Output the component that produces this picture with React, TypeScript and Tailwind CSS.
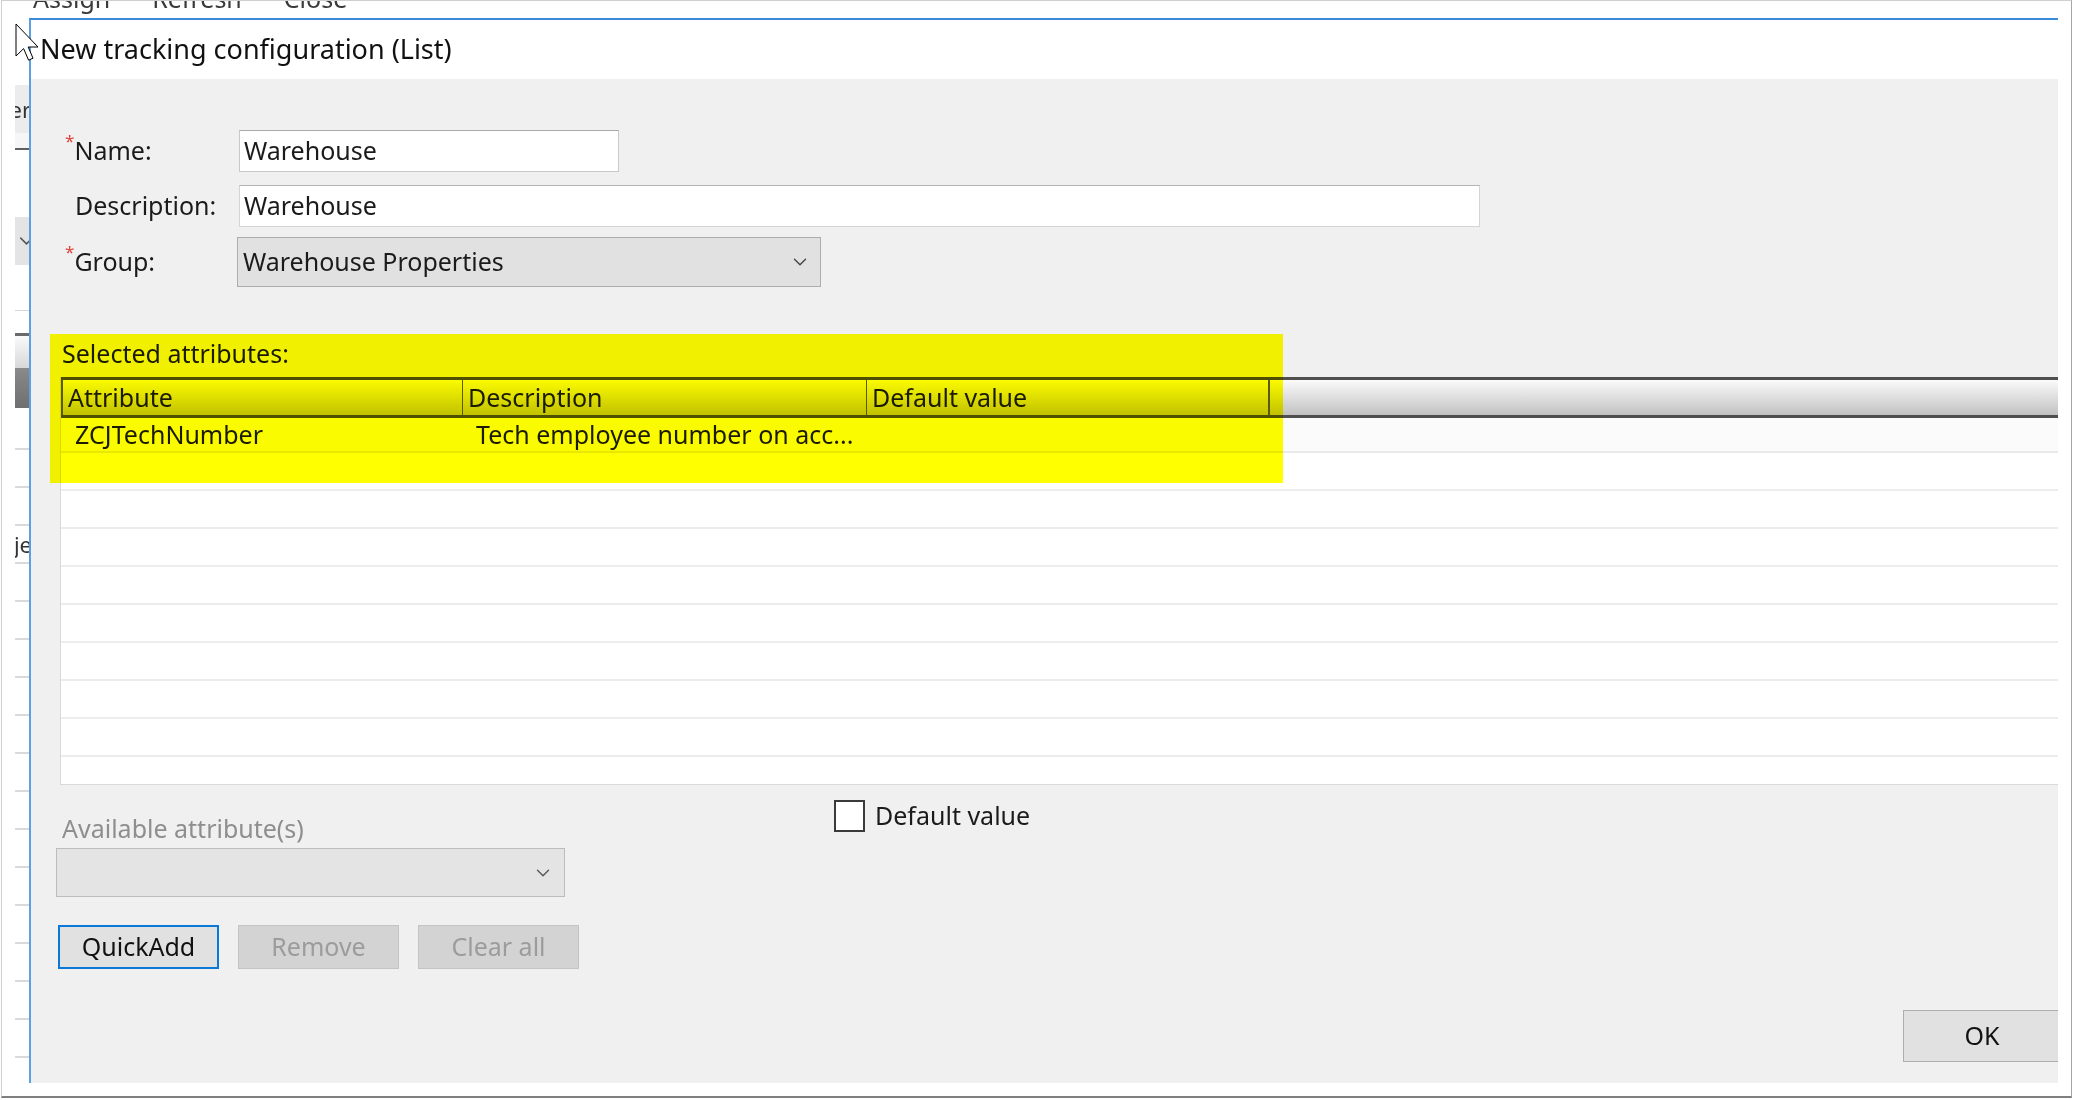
import React from "react";
import { ChevronDown } from "lucide-react";

// one row of the attribute grid
type Row = { attribute: string; description: string; value: string };

const rows: Row[] = [
  { attribute: "ZCJTechNumber", description: "Tech employee number on acc...", value: "" },
  ...Array.from({ length: 9 }, () => ({ attribute: "", description: "", value: "" })),
];

function Cursor() {
  return (
    <svg className="absolute left-[15px] top-[23px]" width="24" height="39" viewBox="0 0 12 19.5">
      <path
        d="M0.5 0.5 V16.5 L4.3 12.8 L6.8 18.6 L9 17.6 L6.6 12 H11.5 Z"
        fill="#fff"
        stroke="#000"
        strokeWidth="0.5"
        strokeLinejoin="miter"
      />
    </svg>
  );
}

// slice of the window that sits behind the dialog
function BackgroundStrip() {
  return (
    <div className="flex w-[27px] shrink-0 flex-col pl-[13px]">
      <div className="h-[67px]" />
      <div className="flex h-[48px] items-center justify-end overflow-hidden bg-[#ececec] text-[22px] text-[#333]">
        <span className="-mr-[2px]">er</span>
      </div>
      <div className="h-[15px] bg-[#f6f6f6]" />
      <div className="h-[2px] bg-[#606060]" />
      <div className="h-[67px]" />
      <div className="flex h-[48px] items-center justify-end overflow-hidden bg-[#e4e4e4]">
        <ChevronDown size={24} strokeWidth={1.5} className="-mr-[9px] text-[#555]" />
      </div>
      <div className="h-[45px]" />
      <div className="h-px bg-[#d6d6d6]" />
      <div className="h-[22px]" />
      <div className="h-[3px] bg-[#6a6a6a]" />
      <div className="h-[32px] bg-gradient-to-b from-[#fafafa] to-[#d8d8d8]" />
      <div className="h-[40px] bg-gradient-to-b from-[#8a8a8a] to-[#6f6f6f]" />
      <div className="h-[40px]" />
      {Array.from({ length: 17 }).map((_, i) => (
        <div key={i} className="flex h-[38px] items-center justify-end overflow-hidden border-t-2 border-[#dadada] text-[22px] text-[#333]">
          {i === 2 ? <span className="-mr-[3px]">je</span> : null}
        </div>
      ))}
    </div>
  );
}

function Dialog() {
  return (
    <div className="flex h-[1065px] w-[2029px] shrink-0 flex-col border-l-2 border-t-2 border-[#3b8ad9] border-l-[#5ba0e3]">
      <div className="flex h-[59px] shrink-0 items-center bg-white pl-[9px] text-[27px] text-[#111]">
        New tracking configuration (List)
      </div>

      <div className="relative flex flex-1 flex-col overflow-hidden bg-[#f0f0f0]">
        {/* header fields */}
        <div className="flex flex-col pl-[44px] pt-[51px]">
          <div className="flex h-[42px] items-center">
            <div className="w-[164px]">
              <span className="-ml-[10px] align-top text-[17px] leading-none text-[#e0403a]">*</span>
              Name:
            </div>
            <div className="flex h-[42px] w-[380px] items-center border border-[#c9c9c9] border-t-[#a9a9a9] bg-white px-[4px]">Warehouse</div>
          </div>
          <div className="mt-[13px] flex h-[42px] items-center">
            <div className="w-[164px]">Description:</div>
            <div className="flex h-[42px] w-[1241px] items-center border border-[#d4d4d4] border-t-[#b4b4b4] bg-white px-[4px]">Warehouse</div>
          </div>
          <div className="mt-[10px] flex h-[50px] items-center">
            <div className="w-[164px]">
              <span className="-ml-[10px] align-top text-[17px] leading-none text-[#e0403a]">*</span>
              Group:
            </div>
            <div className="-ml-[2px] flex h-[50px] w-[584px] items-center justify-between border border-[#adadad] bg-[#e1e1e1] pl-[5px] pr-[9px]">
              <span>Warehouse Properties</span>
              <ChevronDown size={22} strokeWidth={1.5} className="text-[#444]" />
            </div>
          </div>
        </div>

        <div className="mt-[49px] pl-[31px] leading-[34px]">Selected attributes:</div>

        {/* attribute grid */}
        <div className="ml-[29px] mt-[7px] flex h-[408px] flex-col overflow-hidden border-b border-l border-[#d9d9d9] bg-white">
          <div className="flex h-[41px] shrink-0 border-b-[3px] border-t-[3px] border-[#4f4f4f] bg-gradient-to-b from-[#fbfbfb] to-[#c2c2c2]">
            <div className="flex w-[402px] items-center border-l-2 border-r border-[#5a5a5a] pl-[5px]">Attribute</div>
            <div className="flex w-[404px] items-center border-r border-[#5a5a5a] pl-[5px]">Description</div>
            <div className="flex w-[403px] items-center border-r-2 border-[#5a5a5a] pl-[5px]">Default value</div>
            <div className="flex-1" />
          </div>
          {rows.map((r, i) => (
            <div
              key={i}
              className={
                i === 0
                  ? "flex h-[35px] shrink-0 items-center border-b-2 border-[#e9e9e9] bg-[#fbfbfb]"
                  : "flex h-[38px] shrink-0 items-center border-b-2 border-[#ececec]"
              }
            >
              <div className="w-[402px] pl-[14px]">{r.attribute}</div>
              <div className="w-[404px] pl-[13px]">{r.description}</div>
              <div className="w-[403px] pl-[8px]">{r.value}</div>
            </div>
          ))}
        </div>

        {/* lower controls */}
        <div className="flex">
          <div className="flex w-[803px] flex-col pl-[25px]">
            <div className="ml-[6px] mt-[26px] leading-[34px] text-[#8e8e8e]">Available attribute(s)</div>
            <div className="mt-[3px] flex h-[49px] w-[509px] items-center justify-end border border-[#bcbcbc] bg-[#e4e4e4] pr-[10px]">
              <ChevronDown size={22} strokeWidth={1.5} className="text-[#555]" />
            </div>
            <div className="ml-[2px] mt-[28px] flex gap-[19px]">
              <button className="h-[44px] w-[161px] border-2 border-[#0a78d6] bg-[#e1e1e1] text-[#111]">QuickAdd</button>
              <button className="h-[44px] w-[161px] border border-[#c4c4c4] bg-[#d3d3d3] text-[#9c9c9c]">Remove</button>
              <button className="h-[44px] w-[161px] border border-[#c4c4c4] bg-[#d3d3d3] text-[#9c9c9c]">Clear all</button>
            </div>
          </div>
          <div className="mt-[15px] flex h-[32px] items-center gap-[10px]">
            <div className="h-[32px] w-[31px] border-2 border-[#3a3a3a] bg-white" />
            <span>Default value</span>
          </div>
        </div>

        <div className="flex-1" />
        <div className="mb-[21px] flex justify-end">
          <button className="-mr-[3px] h-[52px] w-[158px] border border-[#adadad] bg-[#e1e1e1] text-[#111]">OK</button>
        </div>

        {/* highlighter mark over the selected attributes */}
        <div className="pointer-events-none absolute left-[19px] top-[255px] h-[149px] w-[1233px] bg-[#ffff00] mix-blend-multiply" />
      </div>
    </div>
  );
}

export default function App() {
  return (
    <div className="relative h-[1100px] w-[2073px] overflow-hidden bg-white font-['Noto_Sans','Open_Sans',sans-serif] text-[25px] text-[#1b1b1b]">
      <div className="ml-px flex h-[1098px] w-[2071px] flex-col border border-[#cfcfcf] border-b-2 border-b-[#7f7f7f] border-r-[#a5a5a5]">
        <div className="h-[17px] shrink-0 overflow-hidden pl-[31px]">
          <div className="-mt-[21px] flex gap-[42px] text-[#3a3a3a]">
            <span>Assign</span>
            <span>Refresh</span>
            <span>Close</span>
          </div>
        </div>
        <div className="flex flex-1">
          <BackgroundStrip />
          <Dialog />
        </div>
      </div>
      <Cursor />
    </div>
  );
}
